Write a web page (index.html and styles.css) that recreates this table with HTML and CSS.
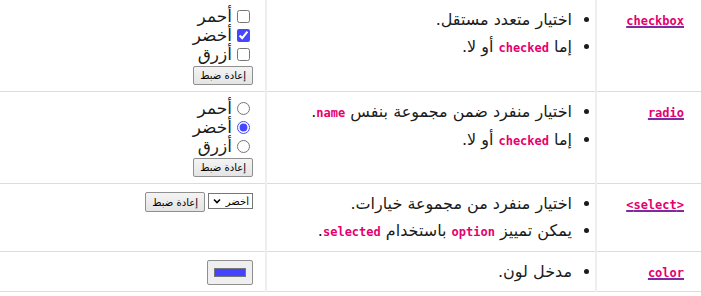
FILE: index.html
```html
<!DOCTYPE html>
<html lang="ar" dir="rtl">
<head>
  <meta charset="UTF-8">
  <meta name="viewport" content="width=device-width, initial-scale=1">
  <title>عناصر الإدخال</title>
  <link rel="stylesheet" href="styles.css">
</head>
<body>
  <table class="inputs">
    <tbody>
      <!-- مربعات الاختيار -->
      <tr>
        <td class="name"><a href="#checkbox"><code>checkbox</code></a></td>
        <td class="desc">
          <ul>
            <li>اختيار متعدد مستقل.</li>
            <li>إما <code>checked</code> أو لا.</li>
          </ul>
        </td>
        <td class="demo">
          <form>
            <label class="opt"><input type="checkbox" name="c1">أحمر</label>
            <label class="opt"><input type="checkbox" name="c2" checked>أخضر</label>
            <label class="opt"><input type="checkbox" name="c3">أزرق</label>
            <button type="reset">إعادة ضبط</button>
          </form>
        </td>
      </tr>
      <!-- أزرار الراديو -->
      <tr>
        <td class="name"><a href="#radio"><code>radio</code></a></td>
        <td class="desc">
          <ul>
            <li>اختيار منفرد ضمن مجموعة بنفس <code>name</code>.</li>
            <li>إما <code>checked</code> أو لا.</li>
          </ul>
        </td>
        <td class="demo">
          <form>
            <label class="opt"><input type="radio" name="r">أحمر</label>
            <label class="opt"><input type="radio" name="r" checked>أخضر</label>
            <label class="opt"><input type="radio" name="r">أزرق</label>
            <button type="reset">إعادة ضبط</button>
          </form>
        </td>
      </tr>
      <!-- القائمة المنسدلة -->
      <tr>
        <td class="name"><a href="#select"><code>&lt;select&gt;</code></a></td>
        <td class="desc">
          <ul>
            <li>اختيار منفرد من مجموعة خيارات.</li>
            <li>يمكن تمييز <code>option</code> باستخدام <code>selected</code>.</li>
          </ul>
        </td>
        <td class="demo">
          <form class="inline">
            <select>
              <option>أحمر</option>
              <option selected>أخضر</option>
              <option>أزرق</option>
            </select>
            <button type="reset">إعادة ضبط</button>
          </form>
        </td>
      </tr>
      <!-- منتقي الألوان -->
      <tr>
        <td class="name"><a href="#color"><code>color</code></a></td>
        <td class="desc">
          <ul>
            <li>مدخل لون.</li>
          </ul>
        </td>
        <td class="demo">
          <input type="color" value="#4444ff">
        </td>
      </tr>
    </tbody>
  </table>
</body>
</html>
```

FILE: styles.css
```css
body {
  margin: 0;
  font-family: "DejaVu Sans", sans-serif;
  font-size: 16px;
  color: #1b1b1b;
  background: #fff;
}
.inputs {
  width: 100%;
  border-collapse: collapse;
}
td {
  vertical-align: top;
  padding: 10px 12px 9px;
  border-bottom: 1px solid #dcdcdc;
}
.name {
  width: 75px;
  padding-right: 17px;
  border-left: 2px solid #eee;
}
.desc {
  width: 304px;
  border-left: 2px solid #eee;
}
.demo {
  padding-top: 7px;
  padding-bottom: 6px;
}
code {
  font-family: "DejaVu Sans Mono", monospace;
  font-size: 12px;
  font-weight: bold;
  color: #e6006f;
}
a {
  color: #e6006f;
  text-decoration: underline;
  text-decoration-color: #7e2aa0;
  text-decoration-thickness: 2px;
  text-underline-offset: 1px;
}
ul {
  margin: 0;
  padding: 0 11px 0 0;
}
li {
  line-height: 20px;
  font-size: 16px;
}
li + li {
  margin-top: 7px;
}
.opt {
  display: block;
  font-size: 17px;
  line-height: 19px;
}
.opt input {
  vertical-align: middle;
  margin: 0 3px 2px 5px;
  accent-color: #4646ff;
}
button {
  margin-top: 2px;
  font-family: "DejaVu Sans", sans-serif;
  font-size: 10px;
  height: 19px;
  padding: 0 6px;
  color: #000;
  background: linear-gradient(#f4f4f4, #e4e4e4);
  border: 1px solid #8f8f8f;
  border-radius: 2px;
}
.inline {
  display: flex;
  align-items: flex-start;
  gap: 3px;
  padding-top: 1px;
}
.inline button {
  margin-top: 0;
  height: 20px;
}
select {
  -webkit-appearance: none;
  appearance: none;
  margin-top: 1px;
  font-family: "DejaVu Sans", sans-serif;
  font-size: 10px;
  width: 45px;
  height: 16px;
  padding: 0 3px 0 14px;
  border: 1px solid #767676;
  border-radius: 0;
  color: #000;
  background: #fff url("data:image/svg+xml,%3Csvg xmlns='http://www.w3.org/2000/svg' width='8' height='6' viewBox='0 0 8 6'%3E%3Cpath d='M1 1.5l3 3 3-3' fill='none' stroke='%23000' stroke-width='1.6'/%3E%3C/svg%3E") no-repeat 4px center;
}
input[type="color"] {
  width: 46px;
  height: 25px;
  margin: 1px 0 0;
  padding: 3px 4px;
  background: #efefef;
  border: 1px solid #8f8f8f;
  border-radius: 2px;
}
```
